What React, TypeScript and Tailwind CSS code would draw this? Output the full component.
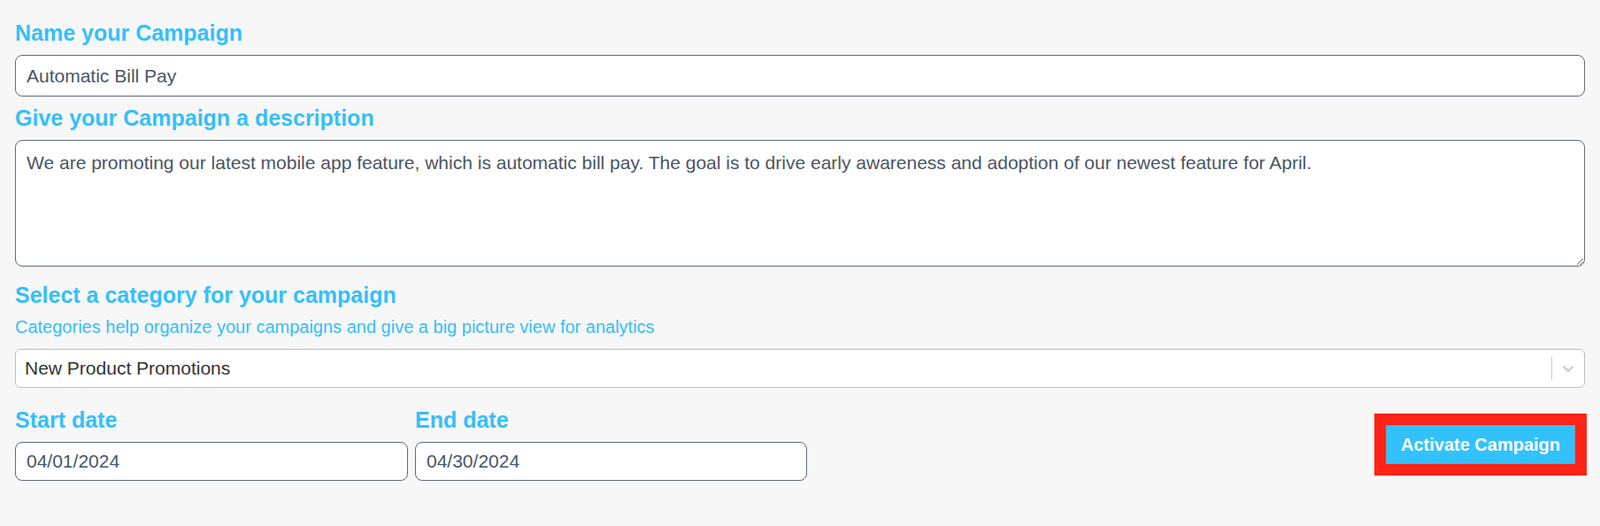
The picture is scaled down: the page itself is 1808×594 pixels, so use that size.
import { useState } from "react";

const headingCls = "text-[25px] leading-[29px] font-bold text-[#35bffa]";
const fieldCls =
  "block w-full bg-white border border-[#626a78] rounded-lg px-3 text-[21px] text-[#4b5563] outline-none";

const Chevron = () => (
  <svg viewBox="0 0 20 20" className="w-5 h-5 fill-[#cccccc]">
    <path d="M4.516 7.548c0.436-0.446 1.043-0.481 1.576 0l3.908 3.747 3.908-3.747c0.533-0.481 1.141-0.446 1.574 0 0.436 0.445 0.408 1.197 0 1.615-0.406 0.418-4.695 4.502-4.695 4.502-0.217 0.223-0.502 0.335-0.787 0.335s-0.57-0.112-0.789-0.335c0 0-4.287-4.084-4.695-4.502s-0.436-1.17 0-1.615z" />
  </svg>
);

export default function App() {
  const [name, setName] = useState("Automatic Bill Pay");
  const [desc, setDesc] = useState(
    "We are promoting our latest mobile app feature, which is automatic bill pay. The goal is to drive early awareness and adoption of our newest feature for April."
  );
  const [start, setStart] = useState("04/01/2024");
  const [end, setEnd] = useState("04/30/2024");

  return (
    <div className="min-h-screen bg-[#f7f7f7] px-[17px] pt-[23px] font-['Liberation_Sans',Arial,sans-serif]">
      <h2 className={headingCls}>Name your Campaign</h2>
      <input
        className={`${fieldCls} mt-[10px] h-[47px]`}
        value={name}
        onChange={(e) => setName(e.target.value)}
      />

      <h2 className={`${headingCls} mt-[10px]`}>Give your Campaign a description</h2>
      <textarea
        className={`${fieldCls} mt-[10px] h-[143px] pt-[12px] leading-[26px] resize-y`}
        value={desc}
        onChange={(e) => setDesc(e.target.value)}
      />

      <h2 className={`${headingCls} mt-[18px]`}>Select a category for your campaign</h2>
      <p className="mt-[10px] text-[20px] leading-[22px] text-[#35bffa]">
        Categories help organize your campaigns and give a big picture view for analytics
      </p>
      <div className="mt-[14px] h-[44px] flex items-center bg-white border border-[#bdbdbd] rounded-md">
        <div className="flex-1 px-[10px] text-[21px] text-[#333333]">New Product Promotions</div>
        <span className="w-px self-stretch my-2 bg-[#cccccc]" />
        <div className="px-2 flex items-center">
          <Chevron />
        </div>
      </div>

      <div className="mt-[22px] flex items-center">
        <div className="w-[444px]">
          <h2 className={headingCls}>Start date</h2>
          <input
            className={`${fieldCls} mt-[10px] h-[44px]`}
            value={start}
            onChange={(e) => setStart(e.target.value)}
          />
        </div>
        <div className="w-[443px] ml-2">
          <h2 className={headingCls}>End date</h2>
          <input
            className={`${fieldCls} mt-[10px] h-[44px]`}
            value={end}
            onChange={(e) => setEnd(e.target.value)}
          />
        </div>
        <div className="ml-auto -mr-[2px] border-[13px] border-[#ff2318]">
          <button className="w-[214px] h-[44px] bg-[#33c1fc] border border-[#7d9fb3] text-white font-bold text-[20px]">
            Activate Campaign
          </button>
        </div>
      </div>
    </div>
  );
}
